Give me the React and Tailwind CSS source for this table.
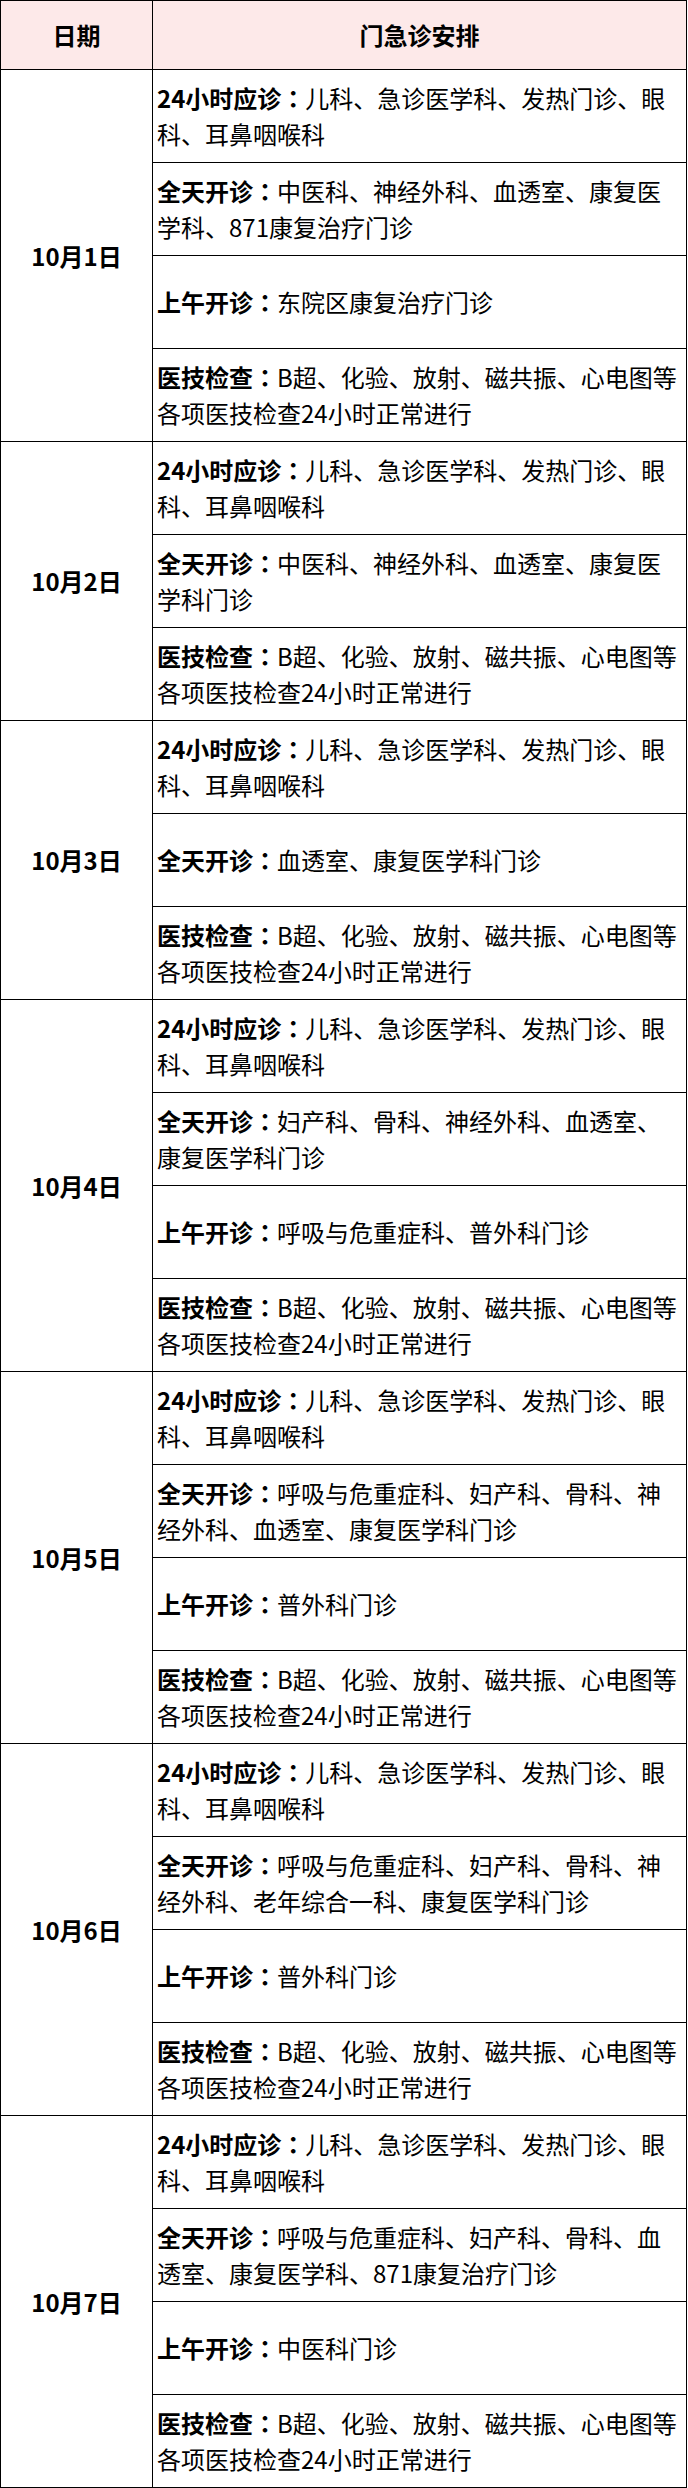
import React from 'react';

const days = [
  {
    date: '10月1日',
    items: [
      ['24小时应诊', '儿科、急诊医学科、发热门诊、眼科、耳鼻咽喉科'],
      ['全天开诊', '中医科、神经外科、血透室、康复医学科、871康复治疗门诊'],
      ['上午开诊', '东院区康复治疗门诊'],
      ['医技检查', 'B超、化验、放射、磁共振、心电图等各项医技检查24小时正常进行'],
    ],
  },
  {
    date: '10月2日',
    items: [
      ['24小时应诊', '儿科、急诊医学科、发热门诊、眼科、耳鼻咽喉科'],
      ['全天开诊', '中医科、神经外科、血透室、康复医学科门诊'],
      ['医技检查', 'B超、化验、放射、磁共振、心电图等各项医技检查24小时正常进行'],
    ],
  },
  {
    date: '10月3日',
    items: [
      ['24小时应诊', '儿科、急诊医学科、发热门诊、眼科、耳鼻咽喉科'],
      ['全天开诊', '血透室、康复医学科门诊'],
      ['医技检查', 'B超、化验、放射、磁共振、心电图等各项医技检查24小时正常进行'],
    ],
  },
  {
    date: '10月4日',
    items: [
      ['24小时应诊', '儿科、急诊医学科、发热门诊、眼科、耳鼻咽喉科'],
      ['全天开诊', '妇产科、骨科、神经外科、血透室、康复医学科门诊'],
      ['上午开诊', '呼吸与危重症科、普外科门诊'],
      ['医技检查', 'B超、化验、放射、磁共振、心电图等各项医技检查24小时正常进行'],
    ],
  },
  {
    date: '10月5日',
    items: [
      ['24小时应诊', '儿科、急诊医学科、发热门诊、眼科、耳鼻咽喉科'],
      ['全天开诊', '呼吸与危重症科、妇产科、骨科、神经外科、血透室、康复医学科门诊'],
      ['上午开诊', '普外科门诊'],
      ['医技检查', 'B超、化验、放射、磁共振、心电图等各项医技检查24小时正常进行'],
    ],
  },
  {
    date: '10月6日',
    items: [
      ['24小时应诊', '儿科、急诊医学科、发热门诊、眼科、耳鼻咽喉科'],
      ['全天开诊', '呼吸与危重症科、妇产科、骨科、神经外科、老年综合一科、康复医学科门诊'],
      ['上午开诊', '普外科门诊'],
      ['医技检查', 'B超、化验、放射、磁共振、心电图等各项医技检查24小时正常进行'],
    ],
  },
  {
    date: '10月7日',
    items: [
      ['24小时应诊', '儿科、急诊医学科、发热门诊、眼科、耳鼻咽喉科'],
      ['全天开诊', '呼吸与危重症科、妇产科、骨科、血透室、康复医学科、871康复治疗门诊'],
      ['上午开诊', '中医科门诊'],
      ['医技检查', 'B超、化验、放射、磁共振、心电图等各项医技检查24小时正常进行'],
    ],
  },
];

export default function App() {
  return (
    <div className="w-[688px] bg-white text-black font-['Noto_Sans_CJK_SC',sans-serif]">
      <table className="w-[687px] table-fixed border-collapse">
        <colgroup>
          <col className="w-[152px]" />
          <col />
        </colgroup>
        <thead>
          <tr className="h-[69px] bg-[#fde9e9]">
            <th className="border border-black text-[24px] font-bold">日期</th>
            <th className="border border-black text-[24px] font-bold">门急诊安排</th>
          </tr>
        </thead>
        <tbody>
          {days.map((day) =>
            day.items.map(([label, text], i) => (
              <tr key={day.date + label} className="h-[93px]">
                {i === 0 && (
                  <td
                    rowSpan={day.items.length}
                    className="border border-black text-center align-middle text-[24px] font-bold"
                  >
                    {day.date}
                  </td>
                )}
                <td className="border border-black px-[4px] align-middle text-[24px] leading-[36px]">
                  <span className="font-bold">
                    {label}
                    <span className="font-['Noto_Sans_CJK_TC',sans-serif]">：</span>
                  </span>
                  {text}
                </td>
              </tr>
            ))
          )}
        </tbody>
      </table>
    </div>
  );
}
